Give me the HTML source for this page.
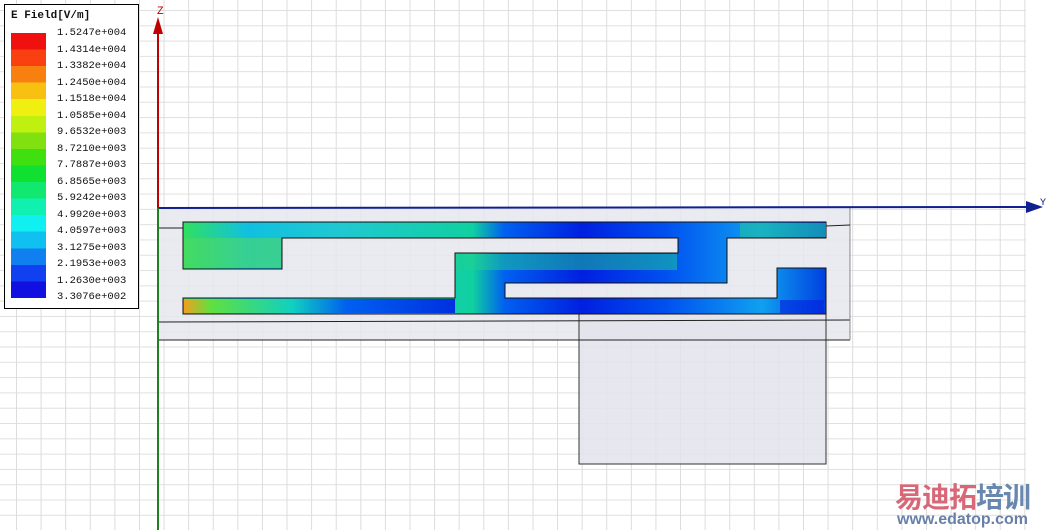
<!DOCTYPE html>
<html><head><meta charset="utf-8"><style>
html,body{margin:0;padding:0;width:1050px;height:530px;overflow:hidden;background:#fff}
#grid{position:absolute;left:0;top:0;width:1026px;height:530px;
background-image:linear-gradient(to right,#dcdcdc 1px,transparent 1px),linear-gradient(to bottom,#e0e0e0 1px,transparent 1px);
background-size:24.6px 15.3px;background-position:16px 10px;}
#legend{position:absolute;left:4px;top:4px;width:133px;height:303px;background:#fff;border:1px solid #000;font-family:"Liberation Mono",monospace;font-size:10.5px;color:#111}
.t{position:absolute;left:6px;top:5px;font-weight:bold;font-size:11px}
.lb{position:absolute;left:52px;width:80px}
.wm{position:absolute;font-family:"Liberation Sans","Noto Sans CJK SC",sans-serif;font-weight:bold}
</style></head><body>
<div id="grid"></div>
<svg width="1050" height="530" style="position:absolute;left:0;top:0">
<defs>
<linearGradient id="g1" x1="0" x2="1" y1="0" y2="0">
<stop offset="0" stop-color="#30e060"/><stop offset="0.1" stop-color="#10c0e0"/>
<stop offset="0.25" stop-color="#20c8d0"/><stop offset="0.45" stop-color="#10d0a0"/>
<stop offset="0.5" stop-color="#0060f0"/><stop offset="0.62" stop-color="#0020e0"/>
<stop offset="0.75" stop-color="#0050f0"/><stop offset="0.9" stop-color="#10a0f0"/>
<stop offset="1" stop-color="#0040e0"/></linearGradient>
<linearGradient id="g2" x1="0" x2="1"><stop offset="0" stop-color="#f0a020"/><stop offset="0.1" stop-color="#60e040"/><stop offset="0.4" stop-color="#10d0c0"/><stop offset="0.6" stop-color="#0060f0"/><stop offset="1" stop-color="#0030e0"/></linearGradient>
</defs>
<rect x="158" y="208" width="692" height="132" fill="#e6e6ef" fill-opacity="0.85"/>
<rect x="579" y="314" width="247" height="150" fill="#e3e3ec" fill-opacity="0.85" stroke="#333" stroke-width="1"/>
<line x1="158" y1="322" x2="850" y2="320" stroke="#222"/>
<line x1="158" y1="340" x2="850" y2="340" stroke="#222"/>
<line x1="850" y1="208" x2="850" y2="340" stroke="#888"/>
<line x1="158" y1="228" x2="183" y2="228" stroke="#222"/>
<line x1="826" y1="226" x2="850" y2="225" stroke="#222"/>
<path d="M183 222H826V238H727V283H505V298H777V268H826V314H183V298H455V253H678V238H282V269H183Z" fill="url(#g1)" stroke="#111"/>
<path d="M184 238H281V268H184Z" fill="#50d860" opacity="0.6"/>
<path d="M184 299H455V313H184Z" fill="url(#g2)"/>
<path d="M456 254H677V270H456Z" fill="#20d090" opacity="0.5"/>
<path d="M780 300H824V313H780Z" fill="#0020e0" opacity="0.6"/>
<path d="M740 223H826V237H740Z" fill="#20c0a0" opacity="0.6"/>
<line x1="158" y1="208" x2="1030" y2="207" stroke="#102090" stroke-width="2"/>
<polygon points="1026,201 1043,207 1026,213" fill="#102090"/>
<text x="1040" y="205" font-family="Liberation Mono,monospace" font-size="10" fill="#102090">Y</text>
<line x1="158" y1="30" x2="158" y2="208" stroke="#c00000" stroke-width="2"/>
<polygon points="153,34 158,17 163,34" fill="#c00000"/>
<text x="157" y="14" font-family="Liberation Mono,monospace" font-size="11" fill="#c00000">Z</text>
<line x1="158" y1="208" x2="158" y2="530" stroke="#208020" stroke-width="2"/>
</svg>
<div id="legend">
<div class="t">E Field[V/m]</div>
<div style="position:absolute;left:6px;top:28px;width:35px;height:265px;background:linear-gradient(to bottom,#f01010 0 6.25%,#f84010 6.25% 12.5%,#f88010 12.5% 18.75%,#f8c010 18.75% 25%,#f0f010 25% 31.25%,#c0f010 31.25% 37.5%,#80e010 37.5% 43.75%,#40e010 43.75% 50%,#10e030 50% 56.25%,#10e870 56.25% 62.5%,#10f0b0 62.5% 68.75%,#10f0f0 68.75% 75%,#10c0f0 75% 81.25%,#1080f0 81.25% 87.5%,#1040f0 87.5% 93.75%,#1010e0 93.75% 100%)"></div>
<div class="lb" style="top:22px">1.5247e+004</div>
<div class="lb" style="top:38.5px">1.4314e+004</div>
<div class="lb" style="top:55px">1.3382e+004</div>
<div class="lb" style="top:71.5px">1.2450e+004</div>
<div class="lb" style="top:88px">1.1518e+004</div>
<div class="lb" style="top:104.5px">1.0585e+004</div>
<div class="lb" style="top:121px">9.6532e+003</div>
<div class="lb" style="top:137.5px">8.7210e+003</div>
<div class="lb" style="top:154px">7.7887e+003</div>
<div class="lb" style="top:170.5px">6.8565e+003</div>
<div class="lb" style="top:187px">5.9242e+003</div>
<div class="lb" style="top:203.5px">4.9920e+003</div>
<div class="lb" style="top:220px">4.0597e+003</div>
<div class="lb" style="top:236.5px">3.1275e+003</div>
<div class="lb" style="top:253px">2.1953e+003</div>
<div class="lb" style="top:269.5px">1.2630e+003</div>
<div class="lb" style="top:286px">3.3076e+002</div>
</div>
<div class="wm" style="left:895px;top:476px;font-size:28px;color:#d86878;letter-spacing:-1px">易迪拓<span style="color:#6888b0">培训</span></div>
<div class="wm" style="left:897px;top:511px;font-size:16px;color:#6880a8">www.edatop.com</div>
</body></html>
